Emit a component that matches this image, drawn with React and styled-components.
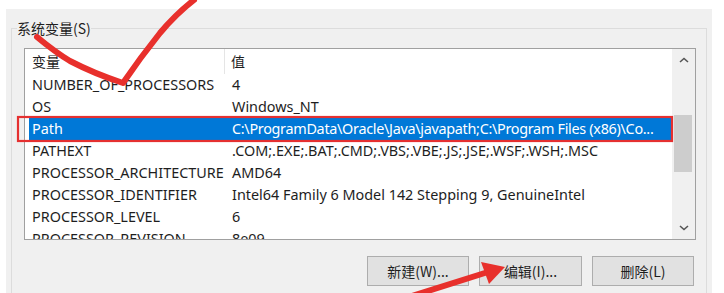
import React from 'react';
import styled, { createGlobalStyle } from 'styled-components';

const Global = createGlobalStyle`
  html, body { margin: 0; padding: 0; background: #ffffff; }
  body { font-family: "Noto Sans", "Noto Sans CJK SC", sans-serif; }
  * { box-sizing: border-box; }
`;

const Stage = styled.div`
  position: relative;
  width: 724px;
  height: 293px;
  overflow: hidden;
  padding: 9px 12px 0 6px;
`;

const Panel = styled.div`
  background: #f0f0f0;
  height: 300px;
  padding: 12px 5px 0 5px;
`;

const Group = styled.fieldset`
  margin: 0;
  padding: 0;
  height: 320px;
  border: 1px solid #dcdcdc;
  min-width: 0;
`;

const Legend = styled.legend`
  margin-left: 5px;
  padding: 0;
  font-family: "Noto Sans CJK SC", sans-serif;
  font-size: 14px;
  line-height: 14px;
  color: #1e1e1e;
`;

const ListView = styled.div`
  margin: 13px 0 0 12px;
  width: 672px;
  height: 192px;
  border: 1px solid #a0a0a0;
  background: #ffffff;
  display: flex;
`;

const ListArea = styled.div`
  flex: 1;
  overflow: hidden;
  display: flex;
  flex-direction: column;
`;

const HeaderRow = styled.div`
  display: flex;
  height: 25px;
  flex: none;
`;

const HeaderCell = styled.div`
  width: ${p => (p.$w ? `${p.$w}px` : 'auto')};
  flex: ${p => (p.$w ? 'none' : '1')};
  padding-left: ${p => p.$pl}px;
  border-right: ${p => (p.$sep ? '1px solid #e5e5e5' : 'none')};
  font-family: "Noto Sans CJK SC", sans-serif;
  font-size: 14px;
  line-height: 25px;
  color: #1e1e1e;
`;

const Row = styled.div`
  display: grid;
  grid-template-columns: 196px 1fr;
  height: 22px;
  flex: none;
  margin-left: 4px;
  background: ${p => (p.$selected ? '#0078d7' : 'transparent')};
  color: ${p => (p.$selected ? '#ffffff' : '#1e1e1e')};
  font-size: 14.4px;
  line-height: 22px;
  white-space: nowrap;
`;

const Cell = styled.div`
  padding-left: ${p => p.$pl}px;
  overflow: hidden;
  letter-spacing: ${p => (p.$tight ? '-0.3px' : 'normal')};
`;

const ScrollBar = styled.div`
  width: 23px;
  flex: none;
  background: #f0f0f0;
  display: flex;
  flex-direction: column;
`;

const ScrollBtn = styled.div`
  height: 22px;
  flex: none;
  display: flex;
  align-items: center;
  justify-content: center;
`;

const Track = styled.div`
  flex: 1;
  padding: 44px 3px 0 2px;
`;

const Thumb = styled.div`
  height: 57px;
  background: #cdcdcd;
`;

const ButtonRow = styled.div`
  display: flex;
  justify-content: flex-end;
  gap: 10px;
  margin-top: 16px;
  padding-right: 12px;
`;

const Button = styled.div`
  width: ${p => p.$w}px;
  height: 30px;
  background: #e1e1e1;
  border: 1px solid #adadad;
  display: flex;
  align-items: center;
  justify-content: center;
  font-family: "Noto Sans CJK SC", sans-serif;
  font-size: 14px;
  color: #1e1e1e;
`;

const Overlay = styled.svg`
  position: absolute;
  left: 0;
  top: 0;
  width: 724px;
  height: 293px;
  pointer-events: none;
`;

const Chevron = ({ up }) => (
  <svg width="10" height="6" viewBox="0 0 10 6">
    <path
      d={up ? 'M1 5 L5 1.5 L9 5' : 'M1 1 L5 4.5 L9 1'}
      fill="none"
      stroke="#555555"
      strokeWidth="1.6"
    />
  </svg>
);

const rows = [
  ['NUMBER_OF_PROCESSORS', '4'],
  ['OS', 'Windows_NT'],
  ['Path', 'C:\\ProgramData\\Oracle\\Java\\javapath;C:\\Program Files (x86)\\Co...', true],
  ['PATHEXT', '.COM;.EXE;.BAT;.CMD;.VBS;.VBE;.JS;.JSE;.WSF;.WSH;.MSC'],
  ['PROCESSOR_ARCHITECTURE', 'AMD64'],
  ['PROCESSOR_IDENTIFIER', 'Intel64 Family 6 Model 142 Stepping 9, GenuineIntel'],
  ['PROCESSOR_LEVEL', '6'],
  ['PROCESSOR_REVISION', '8e09'],
];

export default function App() {
  return (
    <>
      <Global />
      <Stage>
        <Panel>
          <Group>
            <Legend>系统变量(S)</Legend>
            <ListView>
              <ListArea>
                <HeaderRow>
                  <HeaderCell $w={200} $pl={7} $sep>变量</HeaderCell>
                  <HeaderCell $pl={6}>值</HeaderCell>
                </HeaderRow>
                {rows.map(([k, v, sel]) => (
                  <Row key={k} $selected={sel}>
                    <Cell $pl={3}>{k}</Cell>
                    <Cell $pl={7} $tight={sel}>{v}</Cell>
                  </Row>
                ))}
              </ListArea>
              <ScrollBar>
                <ScrollBtn><Chevron up /></ScrollBtn>
                <Track><Thumb /></Track>
                <ScrollBtn><Chevron /></ScrollBtn>
              </ScrollBar>
            </ListView>
            <ButtonRow>
              <Button $w={102}>新建(W)...</Button>
              <Button $w={103}>编辑(I)...</Button>
              <Button $w={102}>删除(L)</Button>
            </ButtonRow>
          </Group>
        </Panel>
        <Overlay viewBox="0 0 724 293">
          <rect x="18" y="117" width="654" height="24" fill="none" stroke="#e53030" strokeWidth="2.2" />
          <path
            d="M37 37 Q55 52 70 61 Q95 74 123 83 Q140 58 160 33 Q176 14 194 0"
            fill="none"
            stroke="#e8302c"
            strokeWidth="6"
            strokeLinecap="round"
            strokeLinejoin="round"
          />
          <path d="M412 296 L488 272" stroke="#e8302c" strokeWidth="6" strokeLinecap="round" />
          <polygon points="505,267 481,262 489,284" fill="#e8302c" />
        </Overlay>
      </Stage>
    </>
  );
}
